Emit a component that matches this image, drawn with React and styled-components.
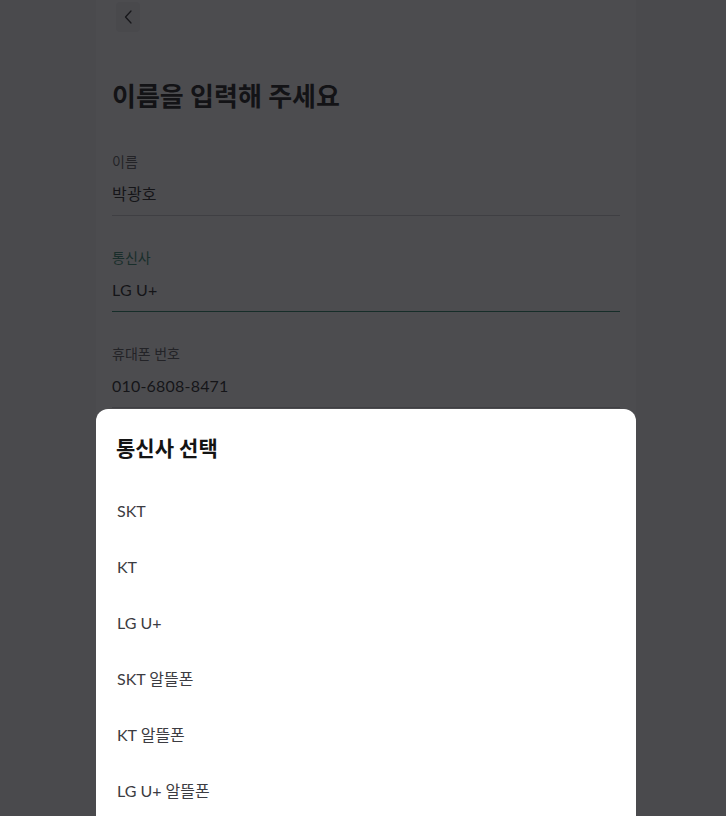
import React, { useState } from 'react';
import styled, { createGlobalStyle } from 'styled-components';

const GlobalStyle = createGlobalStyle`
  * { box-sizing: border-box; }
  html, body { margin: 0; padding: 0; }
  body {
    background: #f4f4f6;
    font-family: Lato, "Noto Sans CJK KR", sans-serif;
    color: #191919;
    overflow: hidden;
  }
`;

const carriers = ['SKT', 'KT', 'LG U+', 'SKT 알뜰폰', 'KT 알뜰폰', 'LG U+ 알뜰폰'];

const Page = styled.div`
  display: flex;
  justify-content: center;
  padding-left: 6px;
  height: 816px;
`;

const Column = styled.div`
  width: 540px;
  height: 100%;
  background: #ffffff;
  padding: 0 16px;
`;

const Header = styled.div`
  display: flex;
  align-items: flex-start;
  height: 30px;
`;

const BackButton = styled.button`
  display: flex;
  align-items: center;
  justify-content: center;
  width: 24px;
  height: 30px;
  margin: 2px 0 0 4px;
  padding: 0;
  border: none;
  border-radius: 4px;
  background: #f0f0f3;
  color: #222;
`;

const Title = styled.h1`
  margin: 49px 0 40px;
  font-size: 26px;
  line-height: 34px;
  font-weight: 700;
  color: #111;
`;

const Field = styled.div`
  display: flex;
  flex-direction: column;
  margin-bottom: 33px;
`;

const Label = styled.label`
  font-size: 14px;
  line-height: 18px;
  color: ${(p) => (p.$active ? '#2c8268' : '#555558')};
`;

const Value = styled.div`
  display: flex;
  align-items: center;
  height: 45px;
  font-size: 16px;
  letter-spacing: 0.2px;
  color: #1a1a1c;
  border-bottom: 1px solid ${(p) => (p.$active ? '#1f7d5f' : '#c8c8cc')};
`;

const Dim = styled.div`
  position: fixed;
  inset: 0;
  background: rgba(20, 20, 24, 0.76);
`;

const SheetWrap = styled.div`
  position: fixed;
  left: 0;
  right: 0;
  bottom: 0;
  display: flex;
  justify-content: center;
  padding-left: 6px;
`;

const Sheet = styled.div`
  width: 540px;
  height: 407px;
  background: #ffffff;
  border-radius: 12px 12px 0 0;
  padding: 25px 20px 0;
`;

const SheetTitle = styled.h2`
  margin: 0 0 20px;
  font-size: 21px;
  line-height: 28px;
  font-weight: 700;
  color: #141414;
`;

const Option = styled.button`
  display: flex;
  align-items: center;
  width: 100%;
  height: 56px;
  padding: 0 0 0 1px;
  border: none;
  background: none;
  font-family: inherit;
  font-size: 16px;
  color: #3c3c42;
  text-align: left;
`;

export default function App() {
  const [carrier, setCarrier] = useState('LG U+');

  return (
    <>
      <GlobalStyle />
      <Page>
        <Column>
          <Header>
            <BackButton aria-label="뒤로">
              <svg width="12" height="14" viewBox="0 0 12 14" fill="none">
                <path d="M9 1L3.5 7L9 13" stroke="currentColor" strokeWidth="1.3" strokeLinecap="round" strokeLinejoin="round" />
              </svg>
            </BackButton>
          </Header>
          <Title>이름을 입력해 주세요</Title>
          <Field>
            <Label>이름</Label>
            <Value>박광호</Value>
          </Field>
          <Field>
            <Label $active>통신사</Label>
            <Value $active>{carrier}</Value>
          </Field>
          <Field>
            <Label>휴대폰 번호</Label>
            <Value>010-6808-8471</Value>
          </Field>
        </Column>
      </Page>
      <Dim />
      <SheetWrap>
        <Sheet>
          <SheetTitle>통신사 선택</SheetTitle>
          {carriers.map((c) => (
            <Option key={c} onClick={() => setCarrier(c)}>
              {c}
            </Option>
          ))}
        </Sheet>
      </SheetWrap>
    </>
  );
}
